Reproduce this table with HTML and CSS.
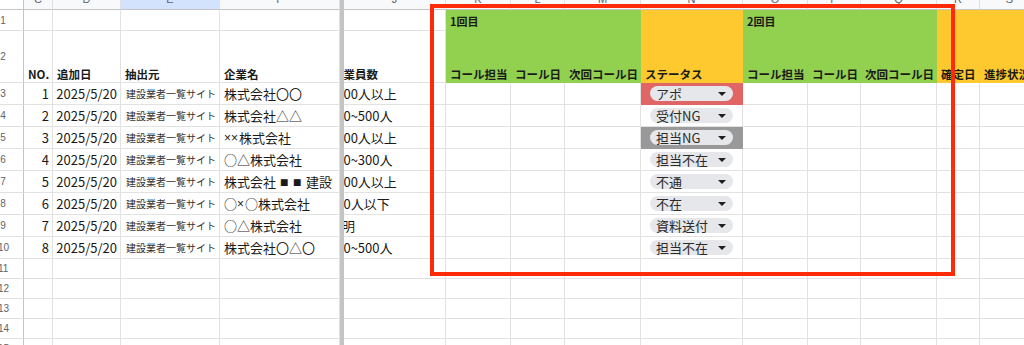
FILE: index.html
```html
<!DOCTYPE html>
<html lang="ja">
<head>
<meta charset="utf-8">
<title>架電リスト</title>
<link rel="stylesheet" href="styles.css">
</head>
<body>
<div class="sheet">
  <div class="freeze"></div>

  <!-- column letters -->
  <div class="ch corner"></div>
  <div class="ch"><span>C</span></div>
  <div class="ch"><span>D</span></div>
  <div class="ch sel"><span>E</span></div>
  <div class="ch"><span>F</span></div>
  <div class="ch"><span>J</span></div>
  <div class="ch"><span>K</span></div>
  <div class="ch"><span>L</span></div>
  <div class="ch"><span>M</span></div>
  <div class="ch"><span>N</span></div>
  <div class="ch"><span>O</span></div>
  <div class="ch"><span>P</span></div>
  <div class="ch"><span>Q</span></div>
  <div class="ch"><span>R</span></div>
  <div class="ch"><span>S</span></div>

  <!-- row 1 -->
  <div class="rh"><span>1</span></div>
  <div class="c"></div><div class="c"></div><div class="c"></div><div class="c"></div>
  <div class="c"></div>
  <div class="c green grp">1回目</div>
  <div class="c green"></div>
  <div class="c green"></div>
  <div class="c yellow"></div>
  <div class="c green grp">2回目</div>
  <div class="c green"></div>
  <div class="c green"></div>
  <div class="c yellow"></div>
  <div class="c yellow"></div>

  <!-- row 2 -->
  <div class="rh"><span>2</span></div>
  <div class="c hd">NO.</div>
  <div class="c hd">追加日</div>
  <div class="c hd">抽出元</div>
  <div class="c hd">企業名</div>
  <div class="c hd cut"><span>従業員数</span></div>
  <div class="c hd green">コール担当</div>
  <div class="c hd green">コール日</div>
  <div class="c hd green">次回コール日</div>
  <div class="c hd yellow">ステータス</div>
  <div class="c hd green">コール担当</div>
  <div class="c hd green">コール日</div>
  <div class="c hd green">次回コール日</div>
  <div class="c hd yellow">確定日</div>
  <div class="c hd yellow">進捗状況</div>

  <!-- data rows -->
  <div class="rh"><span>3</span></div>
  <div class="c num">1</div><div class="c num">2025/5/20</div><div class="c src">建設業者一覧サイト</div><div class="c">株式会社〇〇</div><div class="c cut"><span>1000人以上</span></div>
  <div class="c"></div><div class="c"></div><div class="c"></div>
  <div class="c st red"><div class="chip">アポ<i></i></div></div>
  <div class="c"></div><div class="c"></div><div class="c"></div><div class="c"></div><div class="c"></div>

  <div class="rh"><span>4</span></div>
  <div class="c num">2</div><div class="c num">2025/5/20</div><div class="c src">建設業者一覧サイト</div><div class="c">株式会社△△</div><div class="c cut"><span>300~500人</span></div>
  <div class="c"></div><div class="c"></div><div class="c"></div>
  <div class="c st"><div class="chip">受付NG<i></i></div></div>
  <div class="c"></div><div class="c"></div><div class="c"></div><div class="c"></div><div class="c"></div>

  <div class="rh"><span>5</span></div>
  <div class="c num">3</div><div class="c num">2025/5/20</div><div class="c src">建設業者一覧サイト</div><div class="c"><span class="lat">××</span>株式会社</div><div class="c cut"><span>1000人以上</span></div>
  <div class="c"></div><div class="c"></div><div class="c"></div>
  <div class="c st gray"><div class="chip">担当NG<i></i></div></div>
  <div class="c"></div><div class="c"></div><div class="c"></div><div class="c"></div><div class="c"></div>

  <div class="rh"><span>6</span></div>
  <div class="c num">4</div><div class="c num">2025/5/20</div><div class="c src">建設業者一覧サイト</div><div class="c">○△株式会社</div><div class="c cut"><span>100~300人</span></div>
  <div class="c"></div><div class="c"></div><div class="c"></div>
  <div class="c st"><div class="chip">担当不在<i></i></div></div>
  <div class="c"></div><div class="c"></div><div class="c"></div><div class="c"></div><div class="c"></div>

  <div class="rh"><span>7</span></div>
  <div class="c num">5</div><div class="c num">2025/5/20</div><div class="c src">建設業者一覧サイト</div><div class="c">株式会社<span class="sq">■■</span>建設</div><div class="c cut"><span>1000人以上</span></div>
  <div class="c"></div><div class="c"></div><div class="c"></div>
  <div class="c st"><div class="chip">不通<i></i></div></div>
  <div class="c"></div><div class="c"></div><div class="c"></div><div class="c"></div><div class="c"></div>

  <div class="rh"><span>8</span></div>
  <div class="c num">6</div><div class="c num">2025/5/20</div><div class="c src">建設業者一覧サイト</div><div class="c">○<span class="lat">×</span>○株式会社</div><div class="c cut"><span>100人以下</span></div>
  <div class="c"></div><div class="c"></div><div class="c"></div>
  <div class="c st"><div class="chip">不在<i></i></div></div>
  <div class="c"></div><div class="c"></div><div class="c"></div><div class="c"></div><div class="c"></div>

  <div class="rh"><span>9</span></div>
  <div class="c num">7</div><div class="c num">2025/5/20</div><div class="c src">建設業者一覧サイト</div><div class="c">○△株式会社</div><div class="c cut"><span>不明</span></div>
  <div class="c"></div><div class="c"></div><div class="c"></div>
  <div class="c st"><div class="chip">資料送付<i></i></div></div>
  <div class="c"></div><div class="c"></div><div class="c"></div><div class="c"></div><div class="c"></div>

  <div class="rh"><span>10</span></div>
  <div class="c num">8</div><div class="c num">2025/5/20</div><div class="c src">建設業者一覧サイト</div><div class="c">株式会社〇△〇</div><div class="c cut"><span>300~500人</span></div>
  <div class="c"></div><div class="c"></div><div class="c"></div>
  <div class="c st"><div class="chip">担当不在<i></i></div></div>
  <div class="c"></div><div class="c"></div><div class="c"></div><div class="c"></div><div class="c"></div>

  <!-- empty rows -->
  <div class="rh"><span>11</span></div>
  <div class="c"></div><div class="c"></div><div class="c"></div><div class="c"></div><div class="c"></div><div class="c"></div><div class="c"></div><div class="c"></div><div class="c"></div><div class="c"></div><div class="c"></div><div class="c"></div><div class="c"></div><div class="c"></div>
  <div class="rh"><span>12</span></div>
  <div class="c"></div><div class="c"></div><div class="c"></div><div class="c"></div><div class="c"></div><div class="c"></div><div class="c"></div><div class="c"></div><div class="c"></div><div class="c"></div><div class="c"></div><div class="c"></div><div class="c"></div><div class="c"></div>
  <div class="rh"><span>13</span></div>
  <div class="c"></div><div class="c"></div><div class="c"></div><div class="c"></div><div class="c"></div><div class="c"></div><div class="c"></div><div class="c"></div><div class="c"></div><div class="c"></div><div class="c"></div><div class="c"></div><div class="c"></div><div class="c"></div>
  <div class="rh"><span>14</span></div>
  <div class="c"></div><div class="c"></div><div class="c"></div><div class="c"></div><div class="c"></div><div class="c"></div><div class="c"></div><div class="c"></div><div class="c"></div><div class="c"></div><div class="c"></div><div class="c"></div><div class="c"></div><div class="c"></div>
  <div class="rh"><span>15</span></div>
  <div class="c"></div><div class="c"></div><div class="c"></div><div class="c"></div><div class="c"></div><div class="c"></div><div class="c"></div><div class="c"></div><div class="c"></div><div class="c"></div><div class="c"></div><div class="c"></div><div class="c"></div><div class="c"></div>

  <!-- highlight frame over the call log block -->
  <div class="frame"></div>
</div>
</body>
</html>
```

FILE: styles.css
```css
html, body {
  margin: 0;
  padding: 0;
  background: #fff;
}
body {
  width: 1024px;
  height: 345px;
  overflow: hidden;
  font-family: "Noto Sans CJK JP", "Noto Sans", sans-serif;
  color: #1a1a1a;
}

.sheet {
  position: relative;
  display: grid;
  grid-template-columns: 24px 29px 68px 99px 120px 4px 102px 65px 54px 76px 102px 65px 53px 76px 43px 60px;
  grid-template-rows: 10px 21px 52px repeat(8, 22px) repeat(5, 20px);
  width: 1040px;
}

.freeze {
  grid-column: 6;
  grid-row: 1 / -1;
  background: #c4c4c4;
}

/* column letter strip */
.ch {
  box-sizing: border-box;
  background: #f8f9fa;
  border-right: 1px solid #e0e0e0;
  border-bottom: 1px solid #c4c4c4;
  overflow: hidden;
  text-align: center;
  font-family: "Liberation Sans", sans-serif;
  font-size: 11px;
  color: #5f6368;
}
.ch span {
  display: block;
  line-height: 12px;
  margin-top: -7px;
}
.ch.corner {
  background: #fff;
  border-right: 1px solid #c4c4c4;
}
.ch.sel {
  background: #d3e3fd;
}

/* row numbers */
.rh {
  box-sizing: border-box;
  border-right: 1px solid #c4c4c4;
  border-bottom: 1px solid #e0e0e0;
  display: flex;
  align-items: center;
  overflow: hidden;
  font-family: "Liberation Sans", sans-serif;
  font-size: 10px;
  color: #5f6368;
}
.rh span {
  display: block;
  width: 10px;
  margin-left: -2px;
  text-align: center;
}

/* cells */
.c {
  box-sizing: border-box;
  border-right: 1px solid #e2e2e2;
  border-bottom: 1px solid #e2e2e2;
  display: flex;
  align-items: center;
  padding: 0 3px 0 4px;
  font-size: 13px;
  white-space: nowrap;
  overflow: hidden;
  color: #1a1a1a;
}
.c.num {
  justify-content: flex-end;
}
.c.src {
  font-size: 10px;
  color: #333;
  padding-left: 5px;
}
.c.grp {
  font-weight: 700;
  font-size: 11px;
  padding-top: 2px;
}
.c.hd {
  align-items: flex-end;
  padding-bottom: 0;
  font-weight: 700;
  font-size: 11.5px;
  overflow: visible;
}
.c.cut span {
  margin-left: -19px;
}
.c.hd.cut span {
  margin-left: -16px;
}
.c.hd.cut {
  overflow: hidden;
}

/* symbols set in the Latin face so they stay narrow */
.lat {
  font-family: "Liberation Sans", sans-serif;
  font-size: 12px;
  padding-right: 1px;
}
.sq {
  font-size: 8.5px;
  letter-spacing: 4.5px;
  padding-left: 4px;
}

.green {
  background: #92d050;
  border-color: #92d050;
}
.yellow {
  background: #fec92e;
  border-color: #fec92e;
}
.red {
  background: #e06666;
  border-color: #e06666;
}
.gray {
  background: #999999;
  border-color: #999999;
}

/* status dropdown chip */
.c.st {
  padding: 0 9px;
}
.chip {
  flex: 1;
  height: 15px;
  border-radius: 8px;
  background: #e6e7eb;
  display: flex;
  align-items: center;
  justify-content: space-between;
  padding: 0 7px 0 6px;
  font-size: 13px;
  line-height: 15px;
  color: #2a2a2a;
}
.chip i {
  width: 0;
  height: 0;
  border-left: 4px solid transparent;
  border-right: 4px solid transparent;
  border-top: 4.5px solid #1f1f1f;
}

.frame {
  position: absolute;
  left: 430px;
  top: 4px;
  width: 525px;
  height: 272px;
  box-sizing: border-box;
  border: 4px solid #ff2a0a;
  pointer-events: none;
}
```
